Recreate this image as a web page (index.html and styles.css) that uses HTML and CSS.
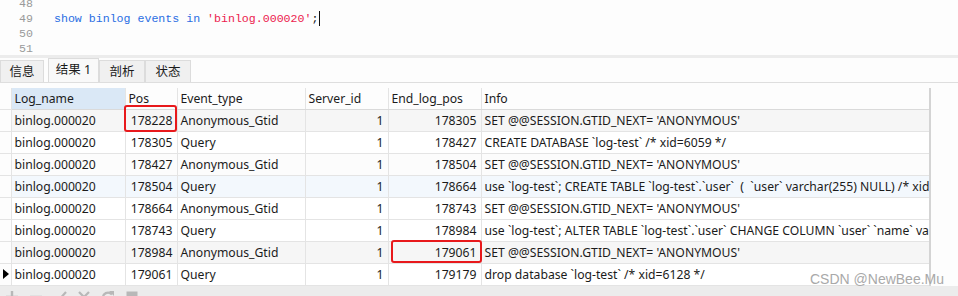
FILE: index.html
```html
<!DOCTYPE html>
<html>
<head>
<meta charset="utf-8">
<link rel="stylesheet" href="styles.css">
</head>
<body>
<div class="editor">
  <div class="lines">
    <div class="line"><span class="ln">48</span><span class="code"></span></div>
    <div class="line"><span class="ln">49</span><span class="code"><span class="kw">show binlog events in</span> <span class="str">'binlog.000020'</span>;<span class="caret"></span></span></div>
    <div class="line"><span class="ln">50</span><span class="code"></span></div>
    <div class="line"><span class="ln">51</span><span class="code"></span></div>
  </div>
</div>
<div class="splitter"></div>
<div class="tabs">
  <div class="tab t1">信息</div>
  <div class="tab active">结果 1</div>
  <div class="tab t3">剖析</div>
  <div class="tab t4">状态</div>
</div>
<div class="gap"></div>
<div class="gridwrap">
  <table class="grid">
    <colgroup>
      <col class="c0"><col class="c1"><col class="c2"><col class="c3"><col class="c4"><col class="c5"><col class="c6">
    </colgroup>
    <thead>
      <tr>
        <th class="ind"></th><th class="sel">Log_name</th><th>Pos</th><th>Event_type</th><th>Server_id</th><th>End_log_pos</th><th class="last">Info</th>
      </tr>
    </thead>
    <tbody>
      <tr class="alt"><td class="ind"></td><td>binlog.000020</td><td class="r">178228</td><td>Anonymous_Gtid</td><td class="r">1</td><td class="r">178305</td><td class="last">SET @@SESSION.GTID_NEXT= 'ANONYMOUS'</td></tr>
      <tr><td class="ind"></td><td>binlog.000020</td><td class="r">178305</td><td>Query</td><td class="r">1</td><td class="r">178427</td><td class="last">CREATE DATABASE `log-test` /* xid=6059 */</td></tr>
      <tr class="alt2"><td class="ind"></td><td>binlog.000020</td><td class="r">178427</td><td>Anonymous_Gtid</td><td class="r">1</td><td class="r">178504</td><td class="last">SET @@SESSION.GTID_NEXT= 'ANONYMOUS'</td></tr>
      <tr class="hover"><td class="ind"></td><td>binlog.000020</td><td class="r">178504</td><td>Query</td><td class="r">1</td><td class="r">178664</td><td class="last">use `log-test`; CREATE TABLE `log-test`.`user`  (  `user` varchar(255) NULL) /* xid=6070 */</td></tr>
      <tr><td class="ind"></td><td>binlog.000020</td><td class="r">178664</td><td>Anonymous_Gtid</td><td class="r">1</td><td class="r">178743</td><td class="last">SET @@SESSION.GTID_NEXT= 'ANONYMOUS'</td></tr>
      <tr><td class="ind"></td><td>binlog.000020</td><td class="r">178743</td><td>Query</td><td class="r">1</td><td class="r">178984</td><td class="last">use `log-test`; ALTER TABLE `log-test`.`user` CHANGE COLUMN `user` `name` varchar(255)</td></tr>
      <tr class="alt"><td class="ind"></td><td>binlog.000020</td><td class="r">178984</td><td>Anonymous_Gtid</td><td class="r">1</td><td class="r">179061</td><td class="last">SET @@SESSION.GTID_NEXT= 'ANONYMOUS'</td></tr>
      <tr><td class="ind"><span class="arrow"></span></td><td>binlog.000020</td><td class="r">179061</td><td>Query</td><td class="r">1</td><td class="r">179179</td><td class="last">drop database `log-test` /* xid=6128 */</td></tr>
    </tbody>
  </table>
  <div class="mark m1"></div>
  <div class="mark m2"></div>
</div>
<div class="toolbar">
  <svg class="ic" width="14" height="14" viewBox="0 0 14 14"><path d="M7 1v12M1 7h12" stroke="#b8b8b8" stroke-width="2.4" fill="none"/></svg>
  <svg class="ic" width="14" height="14" viewBox="0 0 14 14"><path d="M1 7h12" stroke="#b8b8b8" stroke-width="2.4" fill="none"/></svg>
  <svg class="ic" width="14" height="14" viewBox="0 0 14 14"><path d="M1 7l4 4 8-9" stroke="#b8b8b8" stroke-width="2.2" fill="none"/></svg>
  <svg class="ic" width="14" height="14" viewBox="0 0 14 14"><path d="M2 2l10 10M12 2L2 12" stroke="#b8b8b8" stroke-width="2.2" fill="none"/></svg>
  <svg class="ic" width="14" height="14" viewBox="0 0 14 14"><path d="M11 4.5A5 5 0 1 0 12 8" stroke="#b8b8b8" stroke-width="2.2" fill="none"/><path d="M8 1h5v5z" fill="#b8b8b8"/></svg>
  <svg class="ic" width="14" height="14" viewBox="0 0 14 14"><rect x="1.5" y="1.5" width="11" height="11" fill="#b8b8b8"/></svg>
</div>
<div class="watermark">CSDN @NewBee.Mu</div>
</body>
</html>
```
FILE: styles.css
```css
html, body {
  margin: 0;
  padding: 0;
}
body {
  width: 958px;
  height: 296px;
  overflow: hidden;
  background: #fdfdfd;
  position: relative;
  font-family: "Noto Sans", "Noto Sans CJK SC", sans-serif;
  color: #1b1b1b;
}
.editor {
  height: 55px;
  overflow: hidden;
  background: #fdfdfd;
}
.lines {
  margin-top: -4px;
}
.line {
  height: 15px;
  display: flex;
  align-items: center;
  font-family: "Liberation Mono", "DejaVu Sans Mono", monospace;
  font-size: 11.6px;
  line-height: 15px;
}
.ln {
  width: 33px;
  text-align: right;
  color: #9a9a9a;
  flex: none;
}
.code {
  margin-left: 21px;
  color: #111;
  white-space: pre;
}
.kw { color: #2a6ee3; }
.str { color: #ec1c4f; }
.caret {
  display: inline-block;
  width: 1px;
  height: 15px;
  background: #111;
  margin-left: 1px;
  vertical-align: top;
}
.splitter {
  height: 3px;
  background: #ececec;
}
.tabs {
  height: 24px;
  display: flex;
  align-items: flex-end;
  border-bottom: 1px solid #dedede;
  background: #fdfdfd;
}
.tab {
  box-sizing: border-box;
  height: 22px;
  border: 1px solid #dcdcdc;
  border-bottom: none;
  background: #f0f0f0;
  font-size: 12.5px;
  line-height: 21px;
  text-align: center;
  color: #1a1a1a;
}
.t1 { width: 44px; margin-right: 4px; }
.active {
  width: 51px;
  height: 24px;
  background: #f9f9f9;
  line-height: 21px;
}
.t3 { width: 46px; }
.t4 { width: 46px; }
.gap {
  height: 5px;
}
.gridwrap {
  position: relative;
  width: 958px;
}
.grid {
  border-collapse: collapse;
  table-layout: fixed;
  width: 930px;
  font-size: 12.2px;
}
.c0 { width: 11px; }
.c1 { width: 114px; }
.c2 { width: 52px; }
.c3 { width: 128px; }
.c4 { width: 83px; }
.c5 { width: 93px; }
.c6 { width: 449px; }
.grid th, .grid td {
  height: 22px;
  padding: 0 3px;
  border: 1px solid #e4e4e4;
  white-space: pre;
  overflow: hidden;
  text-align: left;
  font-weight: normal;
  box-sizing: border-box;
}
.grid th {
  height: 21px;
  border-top: none;
  border-bottom-color: #dadada;
  background: #fdfdfd;
}
.grid th.sel {
  background: #dae8f6;
}
.grid .ind {
  padding: 0;
  border-left: none;
  background: #fdfdfd;
}
.grid th.ind {
  border-bottom-color: #e4e4e4;
}
.grid .last {
  border-right: 2px solid #d4d4d4;
  text-overflow: clip;
}
.grid td.r {
  text-align: right;
  padding-right: 4px;
}
tbody tr { background: #ffffff; }
tbody tr.alt { background: #f6f6f6; }
tbody tr.alt2 { background: #fcfcfc; }
tbody tr.hover { background: #f3f8fd; }
.arrow {
  display: block;
  width: 0;
  height: 0;
  margin-left: 3px;
  border-top: 5px solid transparent;
  border-bottom: 5px solid transparent;
  border-left: 6px solid #000;
}
.mark {
  position: absolute;
  border: 2px solid #e8191c;
  border-radius: 3px;
  box-sizing: border-box;
}
.m1 { left: 124px; top: 17px; width: 53px; height: 27px; }
.m2 { left: 391px; top: 152px; width: 91px; height: 23px; }
.toolbar {
  height: 11px;
  background: #ececec;
  display: flex;
  gap: 10px;
  padding-left: 5px;
  padding-top: 4px;
  overflow: hidden;
}
.ic { flex: none; }
.watermark {
  position: absolute;
  left: 810px;
  top: 271px;
  font-family: "Liberation Sans", Arial, sans-serif;
  font-size: 14px;
  color: #a9a9a9;
}
```
